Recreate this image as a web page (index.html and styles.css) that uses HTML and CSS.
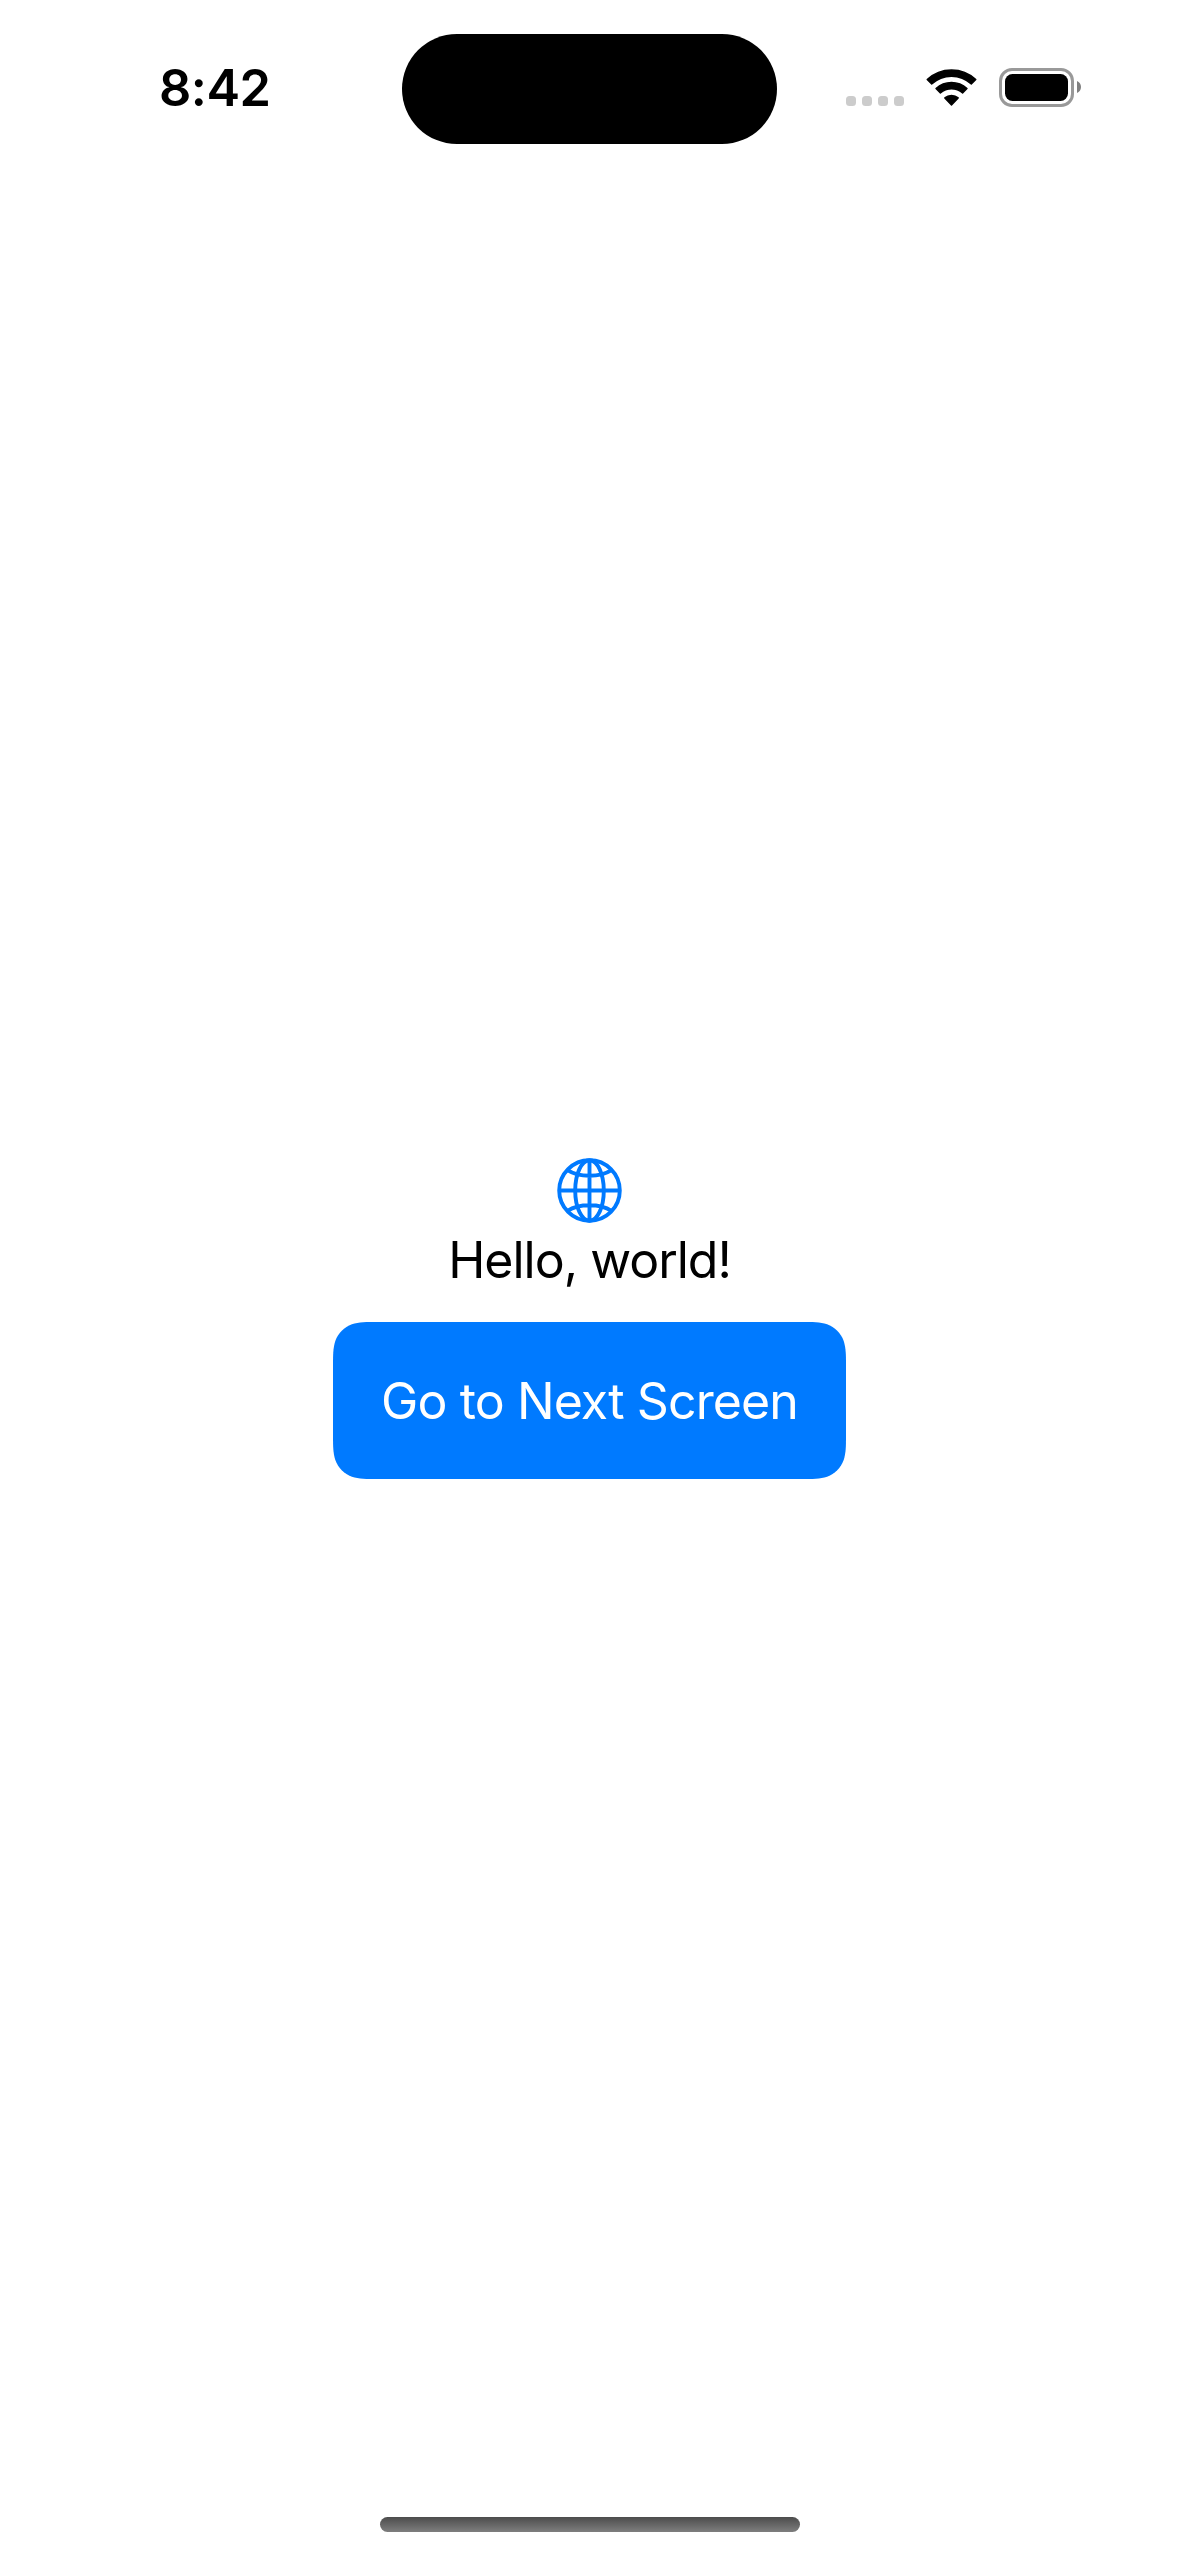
FILE: index.html
```html
<!DOCTYPE html>
<html lang="en">
<head>
<meta charset="utf-8">
<title>Hello, world!</title>
<link rel="stylesheet" href="styles.css">
</head>
<body>
<div class="screen">
  <header class="status-bar">
    <div class="time">8:42</div>
    <div class="island"></div>
    <div class="indicators">
      <div class="signal"><i></i><i></i><i></i><i></i></div>
      <svg class="wifi" width="51" height="38" viewBox="0 0 51 38">
        <g stroke="#000" stroke-width="1.4" stroke-linejoin="round">
          <path d="M1.2 10.6A35.6 35.6 0 0 1 49.8 10.6L45.3 15.1A28.8 28.8 0 0 0 5.7 15.1Z"/>
          <path d="M10 19.6A22.8 22.8 0 0 1 41 19.6L36.6 24A17 17 0 0 0 14.4 24Z"/>
          <path d="M18.8 28.9A10.5 10.5 0 0 1 32.2 28.9L25.5 35.9Z"/>
        </g>
      </svg>
      <div class="battery">
        <div class="battery-shell"><div class="battery-level"></div></div>
        <svg class="battery-cap" width="4" height="12" viewBox="0 0 4 12"><path d="M0 0C2.4 1 4 3.3 4 6S2.4 11 0 12Z" fill="#808080"/></svg>
      </div>
    </div>
  </header>
  <main class="content">
    <svg class="globe" width="65" height="65" viewBox="0 0 65 65" fill="none" stroke="#007aff" stroke-width="3.9">
      <circle cx="32.5" cy="32.5" r="30.3"/>
      <ellipse cx="32.5" cy="32.5" rx="14.3" ry="30.3"/>
      <path d="M32.5 2V63M2 32.5H63M10.5 12.2C22 19.6 43 19.6 54.5 12.2M10.5 52.8C22 45.4 43 45.4 54.5 52.8"/>
    </svg>
    <p class="greeting">Hello, world!</p>
    <button class="next" type="button">Go to Next Screen</button>
  </main>
  <div class="home-indicator"></div>
</div>
</body>
</html>
```
FILE: styles.css
```css
* { box-sizing: border-box; }

body {
  margin: 0;
  background: #fff;
  color: #000;
  font-family: Inter, "Liberation Sans", sans-serif;
}

.screen {
  display: flex;
  flex-direction: column;
  width: 1179px;
  height: 2556px;
  overflow: hidden;
}

.status-bar {
  display: grid;
  grid-template-columns: 401.7px 375.6px 1fr;
  height: 177px;
  padding-top: 33.6px;
  align-items: start;
}

.time {
  padding: 23.4px 0 0 159px;
  font-size: 50.5px;
  line-height: 62px;
  font-weight: 600;
  letter-spacing: -0.5px;
}

.island {
  height: 110.6px;
  border-radius: 55.3px;
  background: #000;
}

.indicators {
  display: flex;
  align-items: flex-end;
  height: 73.4px;
  padding-left: 68.7px;
}

.signal {
  display: flex;
  gap: 6px;
  padding-bottom: 1px;
}

.signal i {
  width: 10px;
  height: 10px;
  border-radius: 3.5px;
  background: #ccc;
}

.wifi { margin-left: 22px; }

.battery {
  display: flex;
  align-items: center;
  gap: 3px;
  margin-left: 22px;
}

.battery-shell {
  width: 75px;
  height: 39px;
  padding: 3px;
  border: 3px solid #999;
  border-radius: 13px;
}

.battery-level {
  height: 27px;
  border-radius: 7.5px;
  background: #000;
}

.content {
  display: flex;
  flex: 1;
  flex-direction: column;
  align-items: center;
  padding-top: 981px;
}

.globe { display: block; }

.greeting {
  margin: 6px 0 0;
  font-size: 50px;
  line-height: 62px;
  letter-spacing: -1px;
}

.next {
  width: 513px;
  height: 157px;
  margin: 31px 0 0;
  padding: 0;
  border: 0;
  background: #007aff;
  color: #fff;
  font: inherit;
  font-size: 50px;
  line-height: 62px;
  letter-spacing: -0.9px;
  white-space: nowrap;
  clip-path: path("M45.9 0H467.1C480.3 0 486.9 0 494.1 2.3C501.8 5.1 507.9 11.2 510.7 18.9C513 26.1 513 32.7 513 45.9V111.1C513 124.3 513 130.9 510.7 138.1C507.9 145.8 501.8 151.9 494.1 154.7C486.9 157 480.3 157 467.1 157H45.9C32.7 157 26.1 157 18.9 154.7C11.2 151.9 5.1 145.8 2.3 138.1C0 130.9 0 124.3 0 111.1V45.9C0 32.7 0 26.1 2.3 18.9C5.1 11.2 11.2 5.1 18.9 2.3C26.1 0 32.7 0 45.9 0Z");
}

.home-indicator {
  align-self: center;
  width: 420px;
  height: 15px;
  margin-bottom: 24px;
  border-radius: 7.5px;
  background: linear-gradient(#4c4c4c, #7e7e7e);
}
```
